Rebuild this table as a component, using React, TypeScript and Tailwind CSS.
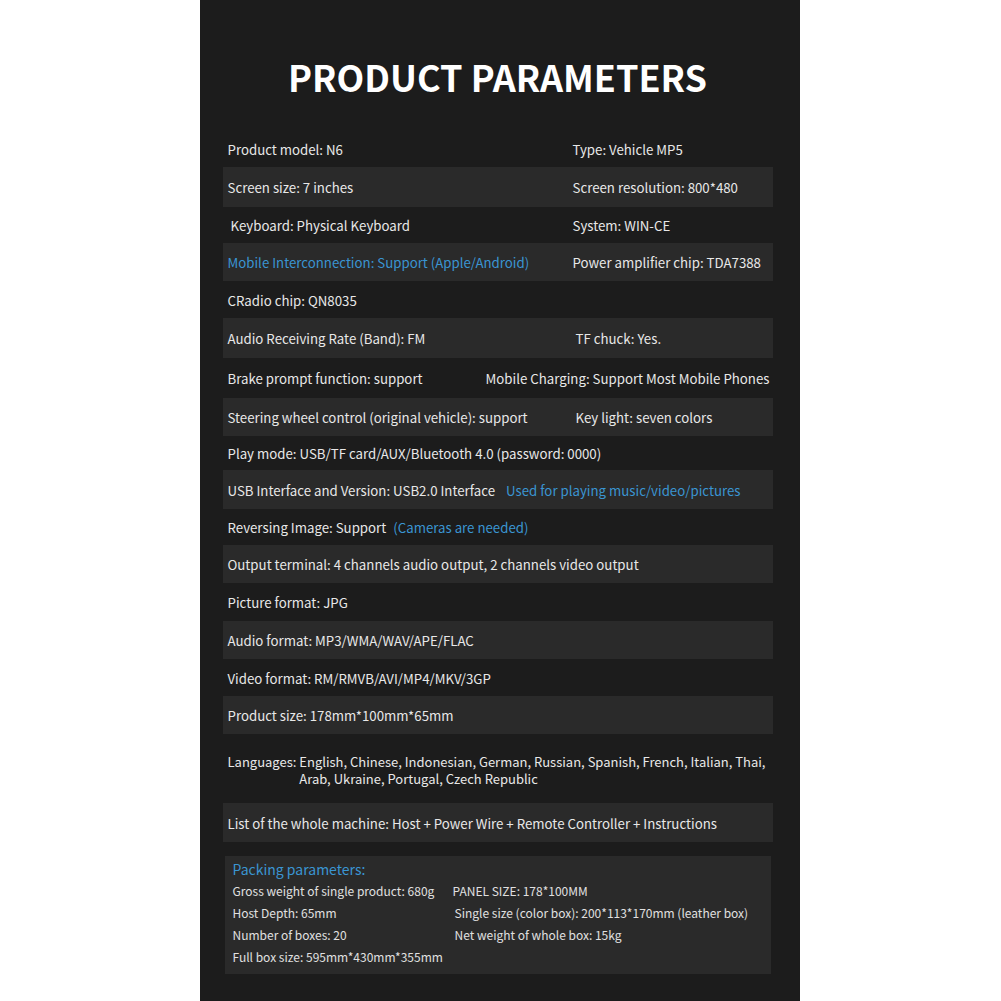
const font = { fontFamily: '"Noto Sans CJK SC", "Noto Sans", sans-serif' };

type Row = {
  h: string;
  shade?: boolean;
  left: React.ReactNode;
  right?: React.ReactNode;
  split?: boolean;
};

function Blue({ children }: { children: React.ReactNode }) {
  return <span className="text-[#3a95d2]">{children}</span>;
}

const rows: Row[] = [
  { h: 'h-[36px]', left: 'Product model: N6', right: 'Type: Vehicle MP5' },
  { h: 'h-[40px]', shade: true, left: 'Screen size: 7 inches', right: 'Screen resolution: 800*480' },
  { h: 'h-[36px]', left: '\u00a0Keyboard: Physical Keyboard', right: 'System: WIN-CE' },
  { h: 'h-[38px]', shade: true, left: <Blue>Mobile Interconnection: Support (Apple/Android)</Blue>, right: 'Power amplifier chip: TDA7388' },
  { h: 'h-[37px]', left: 'CRadio chip: QN8035' },
  { h: 'h-[40px]', shade: true, left: 'Audio Receiving Rate (Band): FM', right: '\u00a0TF chuck: Yes.' },
  { h: 'h-[40px]', split: true, left: 'Brake prompt function: support', right: 'Mobile Charging: Support Most Mobile Phones' },
  { h: 'h-[38px]', shade: true, left: 'Steering wheel control (original vehicle): support', right: '\u00a0Key light: seven colors' },
  { h: 'h-[34px]', left: 'Play mode: USB/TF card/AUX/Bluetooth 4.0 (password: 0000)' },
  {
    h: 'h-[39px]',
    shade: true,
    left: (
      <>
        USB Interface and Version: USB2.0 Interface<span className="ml-[11px]"><Blue>Used for playing music/video/pictures</Blue></span>
      </>
    ),
  },
  {
    h: 'h-[36px]',
    left: (
      <>
        Reversing Image: Support<span className="ml-[7px]"><Blue>(Cameras are needed)</Blue></span>
      </>
    ),
  },
  { h: 'h-[38px]', shade: true, left: 'Output terminal: 4 channels audio output, 2 channels video output' },
  { h: 'h-[38px]', left: 'Picture format: JPG' },
  { h: 'h-[38px]', shade: true, left: 'Audio format: MP3/WMA/WAV/APE/FLAC' },
  { h: 'h-[37px]', left: 'Video format: RM/RMVB/AVI/MP4/MKV/3GP' },
  { h: 'h-[38px]', shade: true, left: 'Product size: 178mm*100mm*65mm' },
];

function ParamRow({ row }: { row: Row }) {
  return (
    <div
      className={`${row.h} flex items-center pt-[2px] text-[13.25px] text-[#e8e8e8] whitespace-nowrap ${row.shade ? 'bg-[#2a2a2a]' : ''} ${row.split ? 'justify-between pl-[5px] pr-[3px]' : 'pl-[5px]'}`}
    >
      {row.split ? (
        <>
          <span>{row.left}</span>
          <span>{row.right}</span>
        </>
      ) : (
        <>
          <span className={row.right ? 'w-[345px]' : ''}>{row.left}</span>
          {row.right && <span>{row.right}</span>}
        </>
      )}
    </div>
  );
}

export default function App() {
  return (
    <div className="min-h-[1001px] bg-white flex justify-center" style={font}>
      <div className="w-[600px] ml-[-2px] bg-[#1c1c1c] flex flex-col pl-[23px] pr-[27px] pb-[27px] leading-none">
        <div className="h-[131px] flex items-center justify-center pt-[21px]">
          <h1 className="text-[36px] font-bold text-white">PRODUCT PARAMETERS</h1>
        </div>

        <div className="flex flex-col">
          {rows.map((r, i) => (
            <ParamRow key={i} row={r} />
          ))}

          <div className="h-[69px] flex items-center pt-[2px] pl-[5px] text-[13px] text-[#e8e8e8] leading-[17px] whitespace-nowrap">
            <div className="flex items-start">
              <span>Languages:&nbsp;</span>
              <span className="flex flex-col">
                <span>English, Chinese, Indonesian, German, Russian, Spanish, French, Italian, Thai,</span>
                <span>Arab, Ukraine, Portugal, Czech Republic</span>
              </span>
            </div>
          </div>

          <div className="h-[39px] flex items-center pt-[2px] pl-[5px] bg-[#2a2a2a] text-[13.25px] text-[#e8e8e8] whitespace-nowrap">
            List of the whole machine: Host + Power Wire + Remote Controller + Instructions
          </div>
        </div>

        <div className="mt-[14px] mx-[2px] h-[118px] bg-[#2a2a2a] px-[8px] pt-[2px] text-[12px] text-[#e0e0e0] leading-[22px]">
          <div className="text-[14px] text-[#3a95d2] leading-[22px]">Packing parameters:</div>
          <div className="grid grid-cols-[222px_1fr] whitespace-nowrap">
            <span>Gross weight of single product: 680g</span>
            <span className="ml-[-2px]">PANEL SIZE: 178*100MM</span>
            <span>Host Depth: 65mm</span>
            <span>Single size (color box): 200*113*170mm (leather box)</span>
            <span>Number of boxes: 20</span>
            <span>Net weight of whole box: 15kg</span>
            <span>Full box size: 595mm*430mm*355mm</span>
          </div>
        </div>
      </div>
    </div>
  );
}
